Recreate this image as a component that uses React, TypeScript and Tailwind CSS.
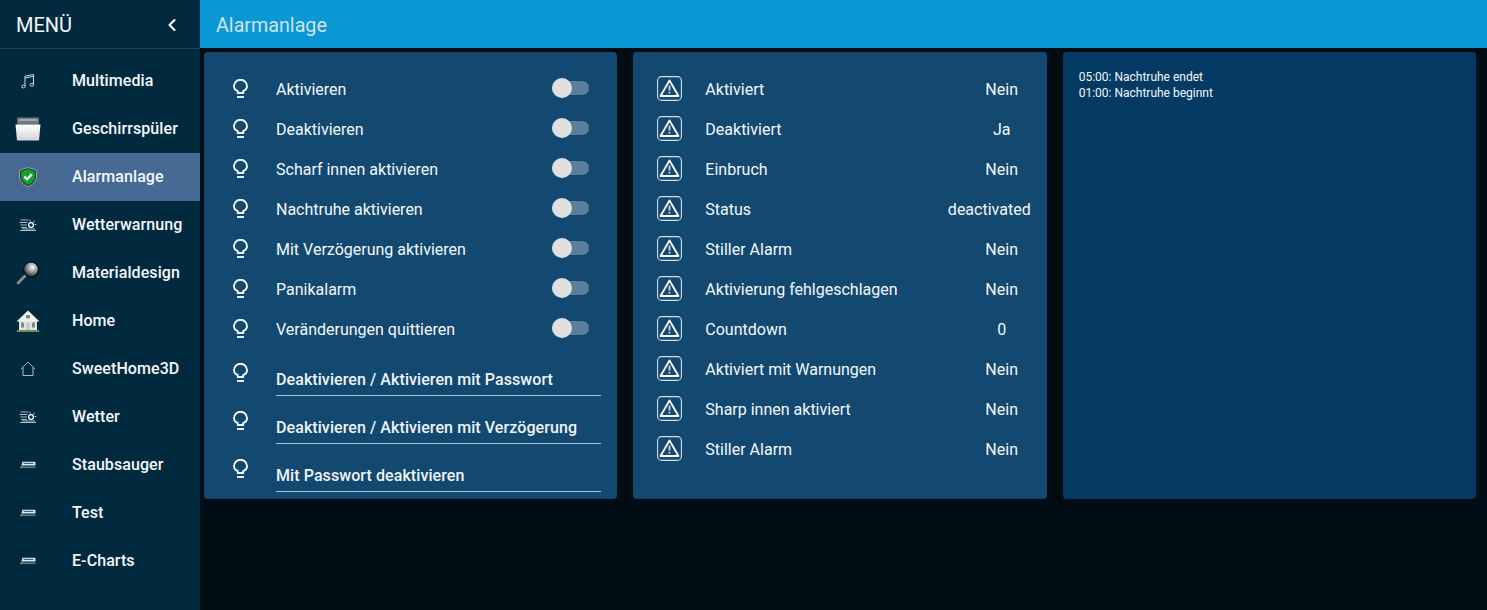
import { ChevronLeft } from "lucide-react";
import type { ReactNode } from "react";

function MusicIcon() {
  return (
    <svg width="14" height="16" viewBox="0 0 14 16" fill="none" stroke="#cfd8de" strokeWidth="1">
      <path d="M4 13V3.2L12.5 1.5v10" />
      <path d="M4 5 12.5 3.4" />
      <ellipse cx="2.5" cy="13.5" rx="1.8" ry="1.4" />
      <ellipse cx="10.8" cy="11.8" rx="1.8" ry="1.4" />
    </svg>
  );
}

function DishwasherIcon() {
  return (
    <svg width="26" height="24" viewBox="0 0 26 24">
      <defs>
        <linearGradient id="dishFront" x1="0" y1="0" x2="0" y2="1">
          <stop offset="0" stopColor="#ffffff" />
          <stop offset="1" stopColor="#d4d4d4" />
        </linearGradient>
      </defs>
      <rect x="2" y="0.5" width="22" height="7" fill="#6f777b" />
      <rect x="4" y="2" width="18" height="2" fill="#a4abae" />
      <path d="M0.5 7.5H25.5L24 23.5H2Z" fill="url(#dishFront)" />
    </svg>
  );
}

function ShieldIcon() {
  return (
    <svg width="18" height="20" viewBox="0 0 18 20">
      <path d="M9 0.5 17.5 3.2V9.5C17.5 14.5 13.5 18 9 19.8 4.5 18 0.5 14.5 0.5 9.5V3.2Z" fill="#2f4a38" stroke="#a4b2a8" strokeWidth="0.8" />
      <path d="M9 2.5 15.5 4.6V9.6C15.5 13.4 12.4 16.2 9 17.6 5.6 16.2 2.5 13.4 2.5 9.6V4.6Z" fill="#12a52e" />
      <path d="M5.4 9.6 8 12.2 12.8 7.4" fill="none" stroke="#ffffff" strokeWidth="2.2" />
    </svg>
  );
}

function WindIcon() {
  return (
    <svg width="18" height="14" viewBox="0 0 18 14" fill="none" stroke="#a9bcc7" strokeWidth="1">
      <path d="M1.5 2H9M0.5 4.5H8.5M1.5 7H8M2 9.5H8" />
      <path d="M1 12.5H17M3 11H16" />
      <circle cx="12" cy="7" r="2.4" stroke="#ffffff" strokeWidth="1.3" />
      <path d="M10.5 1.5 11.5 3.5M15.5 2.5 14.5 4.5M17.5 6.5H15.5" />
    </svg>
  );
}

function MagnifierIcon() {
  return (
    <svg width="24" height="24" viewBox="0 0 24 24">
      <defs>
        <radialGradient id="lensFill" cx="0.6" cy="0.35" r="0.7">
          <stop offset="0" stopColor="#ffffff" />
          <stop offset="0.55" stopColor="#7f878b" />
          <stop offset="1" stopColor="#12171a" />
        </radialGradient>
      </defs>
      <path d="M10 14 2 22" stroke="#8d8d8d" strokeWidth="2.6" strokeLinecap="round" />
      <circle cx="15" cy="8.5" r="7.5" fill="url(#lensFill)" stroke="#070a0c" strokeWidth="1.2" />
    </svg>
  );
}

function HouseIcon() {
  return (
    <svg width="24" height="22" viewBox="0 0 24 22">
      <path d="M12 0.5 23.5 11.5H0.5Z" fill="#f1f1ec" />
      <rect x="10" y="5" width="4" height="3.5" fill="#7d8a80" />
      <rect x="3" y="11" width="18" height="9" fill="#e4e4de" />
      <rect x="5" y="12.5" width="3" height="5" fill="#7e8a82" />
      <rect x="16" y="12.5" width="3" height="5" fill="#7e8a82" />
      <rect x="10.5" y="13" width="3" height="7" fill="#c4c4ba" />
      <rect x="1" y="20" width="22" height="2" fill="#6f8a5c" />
    </svg>
  );
}

function HomeOutlineIcon() {
  return (
    <svg width="16" height="16" viewBox="0 0 16 16" fill="none" stroke="#a9bac4" strokeWidth="1">
      <path d="M1 8 8 1.2 15 8" />
      <path d="M3 6.5V14.5H13V6.5" />
    </svg>
  );
}

function VacuumIcon() {
  return (
    <svg width="16" height="8" viewBox="0 0 16 8">
      <path d="M2.5 0.8H14.5C15.2 0.8 15.5 1.3 15.5 2V4.5H1.4Z" fill="#dfe6ea" />
      <path d="M3.5 2.4H13.5" stroke="#3b5363" strokeWidth="1" />
      <path d="M0.5 6.2H15.5M1 7.5 2.5 4.5" stroke="#9fb0ba" strokeWidth="0.9" fill="none" />
    </svg>
  );
}

function BulbIcon() {
  return (
    <svg width="15" height="19" viewBox="0 0 15 19" fill="none" stroke="#f4f8fb" strokeWidth="1.9">
      <path d="M4.8 14V12.2C2.4 11.1 1 9.2 1 7.2A6.5 6.5 0 0 1 14 7.2C14 9.2 12.6 11.1 10.2 12.2V14Z" />
      <path d="M4 18H11" />
    </svg>
  );
}

function WarningIcon() {
  return (
    <svg className="shrink-0" width="25" height="25" viewBox="0 0 25 25" fill="none">
      <rect x="0.6" y="0.6" width="23.8" height="23.8" rx="4" stroke="#d4dfe8" strokeWidth="1.1" />
      <path d="M12.5 4.5 21.5 20H3.5Z" stroke="#ffffff" strokeWidth="1.8" strokeLinejoin="round" />
      <path d="M12.5 9.5V14.5M12.5 15.8V17.6" stroke="#d4dfe8" strokeWidth="1.8" />
    </svg>
  );
}

const navItems: { label: string; icon: ReactNode; active?: boolean }[] = [
  { label: "Multimedia", icon: <MusicIcon /> },
  { label: "Geschirrspüler", icon: <DishwasherIcon /> },
  { label: "Alarmanlage", icon: <ShieldIcon />, active: true },
  { label: "Wetterwarnung", icon: <WindIcon /> },
  { label: "Materialdesign", icon: <MagnifierIcon /> },
  { label: "Home", icon: <HouseIcon /> },
  { label: "SweetHome3D", icon: <HomeOutlineIcon /> },
  { label: "Wetter", icon: <WindIcon /> },
  { label: "Staubsauger", icon: <VacuumIcon /> },
  { label: "Test", icon: <VacuumIcon /> },
  { label: "E-Charts", icon: <VacuumIcon /> },
];

const switches = [
  "Aktivieren",
  "Deaktivieren",
  "Scharf innen aktivieren",
  "Nachtruhe aktivieren",
  "Mit Verzögerung aktivieren",
  "Panikalarm",
  "Veränderungen quittieren",
];

const inputs = [
  "Deaktivieren / Aktivieren mit Passwort",
  "Deaktivieren / Aktivieren mit Verzögerung",
  "Mit Passwort deaktivieren",
];

const states = [
  ["Aktiviert", "Nein"],
  ["Deaktiviert", "Ja"],
  ["Einbruch", "Nein"],
  ["Status", "deactivated"],
  ["Stiller Alarm", "Nein"],
  ["Aktivierung fehlgeschlagen", "Nein"],
  ["Countdown", "0"],
  ["Aktiviert mit Warnungen", "Nein"],
  ["Sharp innen aktiviert", "Nein"],
  ["Stiller Alarm", "Nein"],
];

export default function App() {
  return (
    <div className="flex h-[610px] w-[1487px] overflow-hidden bg-[#000d14] font-['Roboto',sans-serif] text-white">
      <aside className="w-[200px] shrink-0 bg-[#022a3f]">
        <div className="flex h-[49px] items-center justify-between border-b border-[#1d4054] pt-[2px] pr-[18px] pl-[16px]">
          <span className="text-[20px] leading-none text-[#f4f8fb]">MENÜ</span>
          <ChevronLeft size={20} strokeWidth={2.5} />
        </div>
        <nav className="pt-2">
          {navItems.map((item) => (
            <div
              key={item.label}
              className={`flex h-12 items-center ${item.active ? "bg-[#466a94]" : ""}`}
            >
              <div className="flex w-[56px] shrink-0 items-center justify-center">{item.icon}</div>
              <span className="ml-4 text-[16px] font-medium tracking-[0.08px] text-[#f4f8fb]">
                {item.label}
              </span>
            </div>
          ))}
        </nav>
      </aside>

      <div className="flex min-w-0 flex-1 flex-col">
        <header className="flex h-12 shrink-0 items-center bg-[#0a97d6] px-4 pt-[3px]">
          <h1 className="text-[19.7px] font-normal text-[#cfe3ef]">Alarmanlage</h1>
        </header>

        <main className="grid grid-cols-3 items-start gap-4 pt-1 pr-[11px] pl-1">
          <section className="h-[447px] rounded bg-[#134870] pt-[17px]">
            {switches.map((label) => (
              <div key={label} className="flex h-10 items-center pr-[28px]">
                <div className="flex w-[72px] shrink-0 -translate-y-px justify-center">
                  <BulbIcon />
                </div>
                <span className="translate-y-px text-[16px] text-[#f4f8fb]">{label}</span>
                <div className="ml-auto flex h-[14px] w-[37px] -translate-y-px items-center rounded-full bg-[#5d7f9c]">
                  <div className="h-5 w-5 shrink-0 rounded-full bg-[#e0e0e0]" />
                </div>
              </div>
            ))}
            {inputs.map((label) => (
              <div key={label} className="flex h-12 pr-4">
                <div className="flex w-[72px] shrink-0 justify-center pt-[14px]">
                  <BulbIcon />
                </div>
                <div className="mb-[1px] flex h-[47px] flex-1 items-end border-b border-[#a9c5de] pb-[5px]">
                  <span className="text-[16px] leading-5 font-medium tracking-[0.08px] text-[#f0f4f7]">
                    {label}
                  </span>
                </div>
              </div>
            ))}
          </section>

          <section className="h-[447px] rounded bg-[#134870] pt-[17px]">
            {states.map(([label, value], i) => (
              <div key={`${label}-${i}`} className="flex h-10 items-center pr-4 pl-[24px]">
                <div className="-translate-y-px">
                  <WarningIcon />
                </div>
                <span className="ml-[23px] translate-y-px text-[16px] text-[#f4f8fb]">{label}</span>
                <span className="ml-auto min-w-[58px] translate-y-px text-center text-[16px] whitespace-nowrap text-[#f4f8fb]">
                  {value}
                </span>
              </div>
            ))}
          </section>

          <section className="h-[447px] rounded bg-[#043a63] px-4 pt-[17px] text-[12px] leading-4 text-[#f4f8fb]">
            <div>05:00: Nachtruhe endet</div>
            <div>01:00: Nachtruhe beginnt</div>
          </section>
        </main>
      </div>
    </div>
  );
}
